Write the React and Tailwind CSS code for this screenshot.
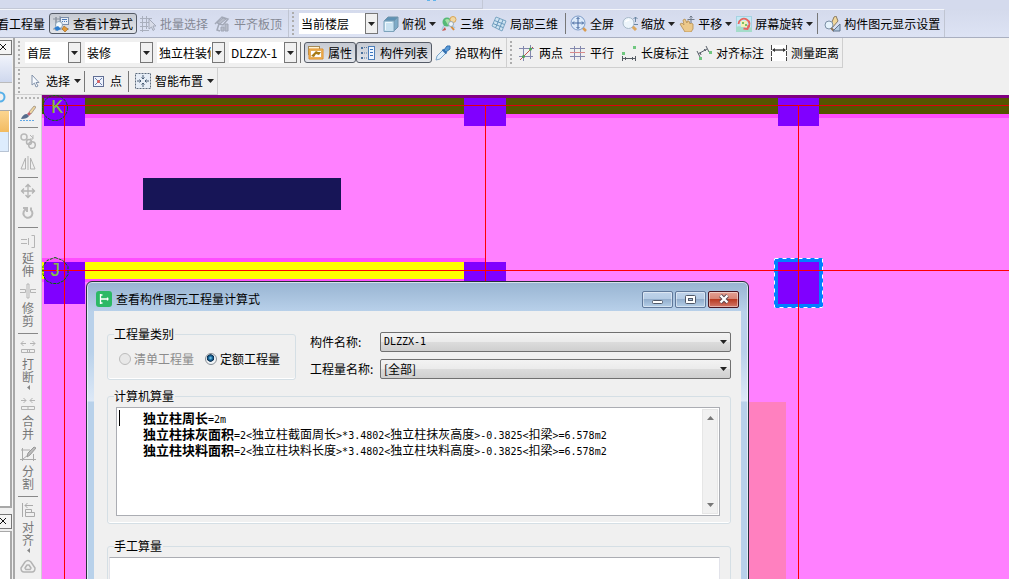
import React from "react";

/* ---------- drawing helpers ---------- */
const Svg = ({ children, w = 16, h = 16 }) => (
  <svg width={w} height={h} viewBox={`0 0 ${w} ${h}`} fill="none" className="shrink-0" aria-hidden="true">
    {children}
  </svg>
);

const Caret = () => (
  <svg width="7" height="4" viewBox="0 0 7 4" className="shrink-0" aria-hidden="true">
    <path d="M0 0h7L3.5 4z" fill="#222" />
  </svg>
);

const icons = {
  formula: (
    <Svg>
      <path d="M3 1v9M7 0v7M0 3h9M0 13h16M3 1l0 14" stroke="#8a929e" />
      <rect x="7.5" y="1.5" width="8" height="7" fill="#e9eff7" stroke="#7d8ea8" />
      <path d="M9 3.5h5M9 5.5h1M11 5.500h1M13 5.500h1" stroke="#4a79b8" />
      <circle cx="6" cy="9" r="3.500" fill="#f4fbff" stroke="#8aa0b4" />
      <path d="M1 12l3 3 4-2-3-3z" fill="#2f7fd0" />
      <path d="M11 10l4 3-3 3-3-3z" fill="#e59a35" stroke="#9b6420" strokeWidth=".6" />
    </Svg>
  ),
  batch: (
    <Svg>
      <path d="M0 2.500h12M0 6.500h9M0 10.500h8M0 14.500h9M2.500 0v16M6.500 0v13" stroke="#a9afbd" />
      <path d="M9 3v10l2.500-2 1.500 3.500 1.500-1L13 10h3z" fill="#d8dce8" stroke="#a3a9b8" />
    </Svg>
  ),
  slab: (
    <Svg>
      <path d="M1 8l7-7 6 2-5 6-4-1-2 6 3 1" stroke="#a3a9b7" strokeWidth="1.500" />
      <path d="M3 7l6-5 3 1-6 5zM7 11h3v4H7zM11 8h3v7h-3z" fill="#b7bcc9" stroke="#a0a6b4" />
    </Svg>
  ),
  cube: (
    <Svg>
      <path d="M1 5l4-4h10l-4 4z" fill="#5f92b5" stroke="#7094ac" />
      <path d="M11 5l4-4v10l-4 4z" fill="#7eabc8" stroke="#7094ac" />
      <path d="M1 5h10v10.500H1z" fill="#c9e2f1" stroke="#7da3bb" />
      <path d="M2.500 14V6.500H9" stroke="#eef8fd" />
    </Svg>
  ),
  orbit: (
    <Svg>
      <path d="M1 14c1-4 3-6 6-6M14 12c-3-3-8-4-10-8" stroke="#a8c9df" strokeWidth="1.500" />
      <circle cx="6" cy="6" r="4.500" fill="#55b977" />
      <path d="M4 4c2-2 4-1 5 1L7 9z" fill="#a8e0a8" />
      <circle cx="12" cy="3.500" r="3" fill="#f1d7a1" stroke="#d8a657" />
      <path d="M9 9l4 5" stroke="#d88b38" strokeWidth="2" />
      <circle cx="10" cy="8" r="2.500" fill="#eef4f8" stroke="#9aabb8" />
      <path d="M1 15l3-4 1 3z" fill="#c8544a" />
    </Svg>
  ),
  local3d: (
    <Svg>
      <path d="M5 1l10 4-4 10L1 10z" fill="#cfe4f2" stroke="#7aa5c2" />
      <path d="M8.500 2.500L4.500 12M12 4L8 13.500M3.500 4.500l10 4M2 7.500l10 4" stroke="#6797bb" />
    </Svg>
  ),
  full: (
    <Svg w={17} h={17}>
      <path d="M12 12l4 4" stroke="#d99c50" strokeWidth="2.500" />
      <circle cx="8" cy="8" r="7" fill="#dceafa" stroke="#7e9cc8" />
      <path d="M8 2.500v11M2.500 8h11M6.500 4L8 2.500 9.500 4M6.500 12L8 13.500 9.500 12M4 6.500L2.500 8 4 9.500M12 6.500L13.500 8 12 9.500" stroke="#41659d" />
    </Svg>
  ),
  zoom: (
    <Svg>
      <path d="M10 10l4 4" stroke="#dca75c" strokeWidth="3" />
      <circle cx="6.500" cy="7" r="5.500" fill="#edf5fb" stroke="#a7b9c9" />
      <path d="M3.500 6c1-2 2-2 4-2" stroke="#fff" strokeWidth="1.500" />
      <path d="M13.500 1v5M11.500 3L13.500 1l2 2M12 8.500h4" stroke="#6b87a3" />
    </Svg>
  ),
  pan: (
    <Svg>
      <path d="M1 8l2-1 2 2-1-5 2-1 2 4 0-2 2 0 1 3 1-1 2 1v5l-2 3H6z" fill="#ecc98b" stroke="#b58e50" strokeWidth=".8" />
      <path d="M12 0v7M8.500 3.500h7M10.500 1.500L12 0l1.500 1.500" stroke="#707b88" />
    </Svg>
  ),
  rotate: (
    <Svg>
      <rect x=".5" y=".5" width="15" height="15" fill="#c5e9f5" stroke="#a6d3e2" />
      <path d="M0 11c5-3 8 3 16 0v5H0z" fill="#a5dcca" />
      <path d="M5 5h6v6H5z" fill="#f3f0b8" />
      <path d="M2.500 8a5.500 5.500 0 1 1 9 4.500M12.500 9l-1 4-4-.5" stroke="#e8655f" strokeWidth="1.800" />
      <path d="M6 6h2v2H6zM9 8h2v2H9z" fill="#7fbf63" />
    </Svg>
  ),
  display: (
    <Svg w={17} h={16}>
      <path d="M10 1l2-1 2 5-6 7-2-1z" fill="#f1d79a" stroke="#8a7c65" />
      <circle cx="5" cy="9" r="4" fill="#e5f2fb" stroke="#7c8fa5" />
      <path d="M7 12l3 3" stroke="#8a7358" strokeWidth="2" />
      <path d="M9 15l7-7v7z" fill="#b4cbe3" stroke="#60748b" />
    </Svg>
  ),
  prop: (
    <Svg>
      <rect x=".5" y="1.500" width="11" height="8" fill="#fff4d4" stroke="#a48a58" />
      <path d="M1 4h14v10H1z" fill="#ffc05b" stroke="#d98c2e" />
      <rect x="2.500" y="5.500" width="11" height="7" fill="#fff" stroke="#e5ad5c" />
      <path d="M3 11l5-5 2 1 3 0-2 3-3-1-2 3z" fill="#a87913" />
    </Svg>
  ),
  list: (
    <Svg>
      <path d="M1 2h2v2H1zM1 7h2v2H1zM1 12h2v2H1z" fill="#49719d" />
      <path d="M4 2.500h3M4 8h3M4 13h3" stroke="#5b7da4" strokeDasharray="1 1" />
      <rect x="8.500" y="1.500" width="6" height="13" fill="#eef5ff" stroke="#4d7eb9" />
      <path d="M10 4.500h3M10 7.500h3M10 10.500h3" stroke="#3873bd" />
    </Svg>
  ),
  pick: (
    <Svg>
      <path d="M1 15l1-4 6-6 3 3-6 6z" fill="#dff0fc" stroke="#7ba5c9" />
      <path d="M7.500 4.500l4 4" stroke="#316fb0" strokeWidth="2" />
      <path d="M9 5l3-4h3v3l-4 3z" fill="#5a9ad6" stroke="#316fb0" />
    </Svg>
  ),
  twoPoint: (
    <Svg>
      <path d="M4.500 1v15M11.500 0v14M0 3.500h15M0 11.500h14" stroke="#8388ad" />
      <path d="M1 15L14 2" stroke="#c44d49" />
      <circle cx="4.500" cy="11.500" r="1.500" fill="#4ca455" />
      <circle cx="11.500" cy="4" r="1.500" fill="#4ca455" />
    </Svg>
  ),
  parallel: (
    <Svg>
      <path d="M4.500 1v14M10.500 1v14M0 3.500h15" stroke="#8388ad" />
      <path d="M0 7.500h15" stroke="#d88a8a" />
      <path d="M0 11.500h15" stroke="#8388ad" />
    </Svg>
  ),
  length: (
    <Svg>
      <path d="M1 7h3v3H1zM12 1h3v3h-3z" fill="#70c780" />
      <path d="M1.500 11v5M14.500 11v5M1.500 13.500h13M4.500 12v3M11.500 12v3" stroke="#555b63" />
    </Svg>
  ),
  align: (
    <Svg>
      <path d="M1 6l3 6M10 1l3 6M2 9l9-5M4 7l1 3M8 4l2 2" stroke="#59606a" />
      <path d="M3 12h3v3H3zM13 6h3v3h-3z" fill="#70c780" />
    </Svg>
  ),
  measure: (
    <Svg>
      <path d="M0 0h16v16H0z" fill="#fff" />
      <path d="M.5 0v16M15.500 0v16" stroke="#444" strokeDasharray="5 1" />
      <path d="M2 5h12" stroke="#333" strokeWidth="1.300" />
      <path d="M4 3L1 5l3 2zM12 3l3 2-3 2z" fill="#333" />
    </Svg>
  ),
  cursor: (
    <Svg>
      <path d="M6 2v10l2.500-2 1.500 4 2-1-2-3.500h3z" fill="#f8fbff" stroke="#8494ab" />
    </Svg>
  ),
  point: (
    <Svg>
      <rect x="3.500" y="3.500" width="10" height="10" fill="#edf2fd" stroke="#606e94" />
      <path d="M5 5l7 7M12 5l-7 7" stroke="#687dab" />
      <circle cx="8.500" cy="8.500" r="1.500" fill="#e45c56" />
    </Svg>
  ),
  smart: (
    <Svg>
      <rect x=".5" y=".5" width="15" height="15" fill="#e6edf6" stroke="#5c6b7c" strokeDasharray="2 1" />
      <path d="M8 2v4M8 10v4M2 8h4M10 8h4M6.500 4.500L8 6l1.500-1.500M6.500 11.500L8 10l1.500 1.500M4.500 6.500L6 8 4.500 9.500M11.500 6.500L10 8l1.500 1.500" stroke="#485d75" />
    </Svg>
  ),
  brush: (
    <Svg>
      <path d="M9 7l5-6 2 1-5 7z" fill="#f0d5a0" stroke="#8f8578" strokeWidth=".7" />
      <path d="M7 9l2-2 2 2-2 2z" fill="#c9606a" />
      <path d="M1 14c1-3 3-5 6-5l2 2c-1 2-4 3-8 3z" fill="#566c8c" />
      <path d="M0 15.500h14" stroke="#62a8e5" strokeDasharray="2 1" />
    </Svg>
  ),
  copy: (
    <Svg>
      <circle cx="4" cy="4" r="3" stroke="#b9b9b9" strokeWidth="1.500" />
      <path d="M10 2l3 3M13 2v4h-3" stroke="#b5b5b5" />
      <circle cx="9" cy="9" r="2.500" stroke="#b5b5b5" strokeWidth="1.500" />
      <circle cx="12" cy="12" r="3.300" stroke="#b5b5b5" strokeWidth="1.500" />
    </Svg>
  ),
  mirror: (
    <Svg>
      <path d="M5.500 3v11H1zM10.500 3v11H15zM8 1v14" stroke="#b3b3b3" />
    </Svg>
  ),
  move: (
    <Svg>
      <path d="M8 1v14M1 8h14M5.500 4L8 1.500 10.500 4M5.500 12L8 14.500 10.500 12M4 5.500L1.500 8 4 10.500M12 5.500L14.500 8 12 10.500" stroke="#b3b3b3" strokeWidth="1.300" />
    </Svg>
  ),
  turn: (
    <Svg>
      <path d="M3 3h4v4M6.500 4A4.500 4.500 0 1 0 11 5V2.500" stroke="#b8b8b8" strokeWidth="2" />
    </Svg>
  ),
  extend: (
    <Svg>
      <path d="M1 6.500h6M1 10.500h6" stroke="#b5b5b5" />
      <path d="M8 5h1v7H8z" fill="#b5b5b5" />
      <path d="M11.500 2.500h3v12h-3" stroke="#b5b5b5" />
    </Svg>
  ),
  trim: (
    <Svg>
      <path d="M0 6.500h5.500v3H0M16 6.500h-5.500v3H16M7 1h2v14H7z" stroke="#b5b5b5" />
    </Svg>
  ),
  breakIt: (
    <Svg>
      <path d="M1 4.500h5M10 4.500h5M3.500 2L1 4.500 3.500 7M12.500 2L15 4.500 12.500 7M1.500 10.500h13v3h-13zM7.500 10v4M9.500 10v4" stroke="#b3b3b3" />
    </Svg>
  ),
  merge: (
    <Svg>
      <path d="M1 4.500h5M10 4.500h5M3.500 2L6 4.500 3.500 7M12.500 2L10 4.500 12.500 7M1.500 10.500h13v3h-13zM8 10v4" stroke="#b3b3b3" />
    </Svg>
  ),
  split: (
    <Svg>
      <path d="M1 4h9M0 13.500h16M2.500 2v13M13.500 8v7M3 13l5-4" stroke="#aaa" />
      <path d="M7 11l1-4 6-6 2 1-6 7z" fill="#bbb" stroke="#999" />
    </Svg>
  ),
  alignV: (
    <Svg>
      <path d="M2.500 1v14M5 3.500h8M7.500 1L5 3.500 7.500 6M5.500 7.500h6v3h-6zM5.500 10.500h9v4h-9z" stroke="#aaa" />
    </Svg>
  ),
  offset: (
    <Svg>
      <path d="M5 3c2-2 4-2 6 0l4 6c0 3-1 4-3 4H4c-2 0-3-1-3-4z" stroke="#b3b3b3" strokeWidth="1.500" />
      <path d="M7 6h2l2 3-1 1.500H6L5 9z" stroke="#b3b3b3" strokeWidth="1.500" strokeLinejoin="round" />
    </Svg>
  ),
};

/* ---------- toolbar parts ---------- */
const Grip = () => (
  <span className="mx-[3px] flex h-6 w-[2px] shrink-0 flex-col justify-between">
    {[0, 1, 2, 3, 4, 5].map((i) => (
      <i key={i} className="block size-[2px] bg-[#adadad]" />
    ))}
  </span>
);

const Sep = ({ className = "" }) => <span className={`h-[21px] w-px shrink-0 bg-[#777] ${className}`} />;

const Tool = ({ icon, label, caret, pressed, disabled, tight, className = "" }) => (
  <button
    type="button"
    disabled={disabled}
    aria-pressed={pressed}
    className={`flex h-[21px] shrink-0 items-center whitespace-nowrap ${tight ? "gap-[3px] px-[2px]" : "gap-1 px-[3px]"} ${
      pressed ? "rounded-[3px] border border-[#555b66] bg-linear-to-b from-[#c6cad2] to-[#e3e5ea]" : ""
    } ${disabled ? "text-[#858995]" : "text-black"} ${className}`}
  >
    {icons[icon]}
    <span>{label}</span>
    {caret && <Caret />}
  </button>
);

const Drop = ({ label, value, className = "" }) => (
  <span className={`relative flex h-[21px] shrink-0 bg-white ${className}`}>
    <select aria-label={label} className="w-full appearance-none overflow-hidden bg-transparent pr-[14px] pl-[2px] outline-none">
      <option>{value}</option>
    </select>
    <span className="pointer-events-none absolute inset-y-0 right-0 flex w-[13px] items-center justify-center border border-[#777] bg-[#f0f0f0]">
      <Caret />
    </span>
  </span>
);

const VTool = ({ icon, label, caret }) => (
  <button type="button" aria-label={label || icon} className="flex w-full shrink-0 flex-col items-center text-[#777]">
    {icons[icon]}
    {label && <span className="mt-[2px] w-3 leading-[13px] break-all">{label}</span>}
    {caret && (
      <svg width="3" height="5" viewBox="0 0 3 5" className="mt-[2px]" aria-hidden="true">
        <path d="M3 0v5L0 2.500z" fill="#888" />
      </svg>
    )}
  </button>
);

const VSep = () => <span className="-mb-px h-px w-5 shrink-0 bg-[#888]" />;

const PanelClose = () => (
  <button type="button" aria-label="关闭" className="flex h-[15px] w-3 shrink-0 items-center justify-start border border-l-0 border-[#777] bg-[#f4f4f4]">
    <svg width="7" height="7" viewBox="0 0 7 7" aria-hidden="true">
      <path d="M0 0l6 6M6 0L0 6" stroke="#111" />
    </svg>
  </button>
);

/* ---------- drawing area ---------- */
const Plan = () => (
  <svg className="block h-full w-full" aria-label="平面图">
    <rect width="100%" height="100%" fill="#ff80ff" />
    <rect width="100%" height="3" fill="#800080" />
    <rect y="3" width="100%" height="16" fill="#555500" />
    <rect y="19" width="100%" height="4" fill="#ff4dff" />
    <rect y="163" width="443" height="24" fill="#ff4dff" />
    <rect y="167" width="422" height="17" fill="#ffff00" />
    <rect x="101" y="83" width="198" height="32" fill="#171557" />
    <rect x="600" y="307" width="144" height="100%" fill="#ff80bf" />
    <g fill="#8000ff">
      <rect x="2" y="3" width="41" height="28" />
      <rect x="422" y="3" width="42" height="28" />
      <rect x="736" y="3" width="41" height="28" />
      <rect x="2" y="167" width="41" height="42" />
      <rect x="422" y="167" width="42" height="42" />
    </g>
    <rect x="732" y="163" width="49" height="50" fill="#0080ff" />
    <rect x="732.500" y="163.500" width="48" height="49" fill="none" stroke="#fff" strokeDasharray="4 4" />
    <rect x="736" y="167" width="41" height="42" fill="#8000ff" />
    <g fill="#ff0000">
      <rect y="10" width="100%" height="1" fill="#e0000c" />
      <rect y="175" width="100%" height="1" />
      <rect x="22" y="10" width="1" height="100%" />
      <rect x="443" y="10" width="1" height="200" />
      <rect x="756" y="10" width="1" height="100%" />
    </g>
    <g fill="none" stroke="#007000" strokeDasharray="3 1">
      <circle cx="13" cy="13" r="12.500" />
      <path d="M13 162.500l8 3 5 6v8l-4 6-6 3h-6l-6-3-3-6v-8l4-6z" />
    </g>
    <g fill="#86c440" fontFamily="'Liberation Mono', monospace" fontSize="20">
      <text x="9" y="18">K</text>
      <text x="7" y="181">J</text>
    </g>
  </svg>
);

/* ---------- dialog ---------- */
const WinBtn = ({ label, danger, children }) => (
  <button
    type="button"
    aria-label={label}
    className={`flex h-[17px] w-[31px] items-center justify-center rounded-[2px] border shadow-[inset_0_0_0_1px_rgba(255,255,255,0.45)] ${
      danger
        ? "border-[#4a1520] bg-[linear-gradient(#e3a093,#d68474_48%,#b83b22_50%,#d2786a)]"
        : "border-[#60789a] bg-[linear-gradient(#bfd3ea,#b4cbe4_48%,#93aecd_50%,#b5cfe8)]"
    }`}
  >
    {children}
  </button>
);

const Field = ({ id, label, mono, children }) => (
  <div className="flex h-5 items-center">
    <label htmlFor={id} className="w-[70px] shrink-0 whitespace-nowrap">
      {label}:
    </label>
    <span className="relative flex h-full min-w-0 flex-1">
      <select
        id={id}
        className={`w-full appearance-none rounded-[2px] border border-[#707070] bg-[linear-gradient(#f3f3f3,#ebebeb_48%,#dcdcdc_50%,#cfcfcf)] pl-[3px] outline-none ${
          mono ? "font-['DejaVu_Sans_Mono',monospace] text-[10px]" : ""
        }`}
      >
        {children}
      </select>
      <span className="pointer-events-none absolute inset-y-0 right-1 flex items-center">
        <Caret />
      </span>
    </span>
  </div>
);

const Group = ({ legend, className = "", children }) => (
  <fieldset className={`min-w-0 rounded-[3px] border border-[#d5dfe5] shadow-[inset_0_-1px_0_#fff] ${className}`}>
    <legend className="ml-[6px] h-[14px] pr-px leading-[14px]">{legend}</legend>
    {children}
  </fieldset>
);

const Radio = ({ label, on, disabled }) => (
  <label className={`flex items-center gap-[3px] ${disabled ? "text-[#8c8c8c]" : ""}`}>
    <input
      type="radio"
      name="kind"
      defaultChecked={on}
      disabled={disabled}
      className="size-3 appearance-none rounded-full border border-[#8a9096] bg-[#f4f4f4] checked:bg-[radial-gradient(circle_at_45%_40%,#8fd6f5_0,#1b6fa3_22%,#0c2d4d_42%,#f0f4f7_50%)] disabled:border-[#bcbcbc] disabled:bg-[#e8e8e8]"
    />
    {label}
  </label>
);

/* Half-width characters take half the width of a Chinese one. */
const H = ({ children }) => <span className="font-['DejaVu_Sans_Mono',monospace] text-[10px]">{children}</span>;
const B = ({ children }) => <b className="text-[13px]">{children}</b>;

const rows = [
  ["独立柱抹灰面积", "独立柱截面周长", "独立柱抹灰高度"],
  ["独立柱块料面积", "独立柱块料长度", "独立柱块料高度"],
];

const Dialog = () => (
  <section
    role="dialog"
    aria-labelledby="dlg-title"
    className="absolute top-[186px] left-[44px] flex h-[480px] w-[663px] flex-col rounded-t-[6px] border border-[#26303a] bg-[linear-gradient(#98b4d2,#b9d1ea_30px,#b9d1ea_70px,#dde9f7_119px,#b8d1ea_120px)] px-[7px] shadow-[inset_0_0_0_1px_rgba(255,255,255,0.6)]"
  >
    <header className="flex h-[29px] shrink-0 items-center pt-[5px] pr-[2px] pl-[2px]">
      <svg width="16" height="16" viewBox="0 0 16 16" aria-hidden="true">
        <rect width="16" height="16" rx="3" fill="#2cb965" />
        <path d="M4.500 3v10M4.500 8h8M4.500 4h2M4.500 12h2M11.500 6.500v3" stroke="#fff" strokeWidth="1.300" />
      </svg>
      <h1 id="dlg-title" className="ml-1 flex-1">
        查看构件图元工程量计算式
      </h1>
      <div className="flex gap-[2px]">
        <WinBtn label="最小化">
          <svg width="11" height="11" viewBox="0 0 11 11" aria-hidden="true">
            <rect x=".5" y="6.500" width="10" height="3" rx="1" fill="#fff" stroke="#505968" />
          </svg>
        </WinBtn>
        <WinBtn label="最大化">
          <svg width="11" height="9" viewBox="0 0 11 9" aria-hidden="true">
            <rect x=".5" y=".5" width="10" height="8" rx="1" fill="#fff" stroke="#505968" />
            <rect x="3.500" y="3.500" width="4" height="2" fill="#a9c0dc" stroke="#505968" />
          </svg>
        </WinBtn>
        <WinBtn label="关闭窗口" danger>
          <svg width="12" height="10" viewBox="0 0 12 10" aria-hidden="true">
            <path d="M2.500 1.500l7 7M9.500 1.500l-7 7" stroke="#5b4650" strokeWidth="4" />
            <path d="M2.500 1.500l7 7M9.500 1.500l-7 7" stroke="#fff" strokeWidth="2.300" />
          </svg>
        </WinBtn>
      </div>
    </header>

    <div className="flex-1 bg-[#f0f0f0] pt-4 pr-[10px] pl-[13px]">
      <div className="flex gap-[14px]">
        <Group legend="工程量类别" className="h-[53px] w-[189px] shrink-0">
          <div className="flex gap-[11px] pt-[10px] pl-[11px]">
            <Radio label="清单工程量" disabled />
            <Radio label="定额工程量" on />
          </div>
        </Group>
        <div className="flex min-w-0 flex-1 flex-col gap-[7px] pt-[5px]">
          <Field id="part" label="构件名称" mono>
            <option>DLZZX-1</option>
          </Field>
          <Field id="qty" label="工程量名称">
            <option>[全部]</option>
          </Field>
        </div>
      </div>

      <Group legend="计算机算量" className="mt-[9px]">
        <div className="mt-[4px] mr-[10px] mb-[7px] ml-2 flex h-[109px] border border-[#abadb3] bg-white">
          <div
            role="textbox"
            aria-label="计算式"
            aria-multiline="true"
            tabIndex={0}
            className="flex min-w-0 flex-1 gap-[23px] overflow-hidden py-[2px] pl-[2px] whitespace-nowrap outline-none"
          >
            <span className="h-4 w-px shrink-0 bg-black" />
            <div>
              <p className="h-4 leading-4">
                <B>独立柱周长</B>
                <H>=2m</H>
              </p>
              {rows.map(([name, len, height]) => (
                <p key={name} className="h-4 leading-4">
                  <B>{name}</B>
                  <H>=2&lt;</H>
                  {len}
                  <H>&gt;*3.4802&lt;</H>
                  {height}
                  <H>&gt;-0.3825&lt;</H>
                  扣梁
                  <H>&gt;=6.578m2</H>
                </p>
              ))}
            </div>
          </div>
          <div className="my-px mr-px flex w-4 shrink-0 flex-col items-center justify-between border border-[#e6e6e6] bg-[#f1f1f1] py-[6px]">
            <svg width="7" height="4" viewBox="0 0 7 4" aria-hidden="true">
              <path d="M0 4h7L3.500 0z" fill="#777" />
            </svg>
            <svg width="7" height="4" viewBox="0 0 7 4" aria-hidden="true">
              <path d="M0 0h7L3.500 4z" fill="#777" />
            </svg>
          </div>
        </div>
      </Group>

      <Group legend="手工算量" className="mt-[15px] h-[120px]">
        <div className="mt-1 mr-[10px] ml-px">
          <textarea aria-label="手工算量" className="block h-[90px] w-full resize-none border border-[#e2e3ea] border-t-[#abadb3] bg-white outline-none" />
        </div>
      </Group>
    </div>
  </section>
);

/* ---------- page ---------- */
export default function App() {
  return (
    <div className="flex h-screen flex-col overflow-hidden bg-[#f0f0f0] font-['Noto_Sans_CJK_SC',sans-serif] text-[12px] leading-4 text-black">
      <div className="flex h-[9px] shrink-0 bg-[#d4daed]">
        <div className="flex w-[483px] justify-end border-r border-b border-[#c3c8d6] pr-[45px]">
          <svg width="10" height="2" viewBox="0 0 10 2" aria-hidden="true">
            <path d="M0 0h3v1H0zM6 0h3v1H6z" fill="#62b4ea" />
          </svg>
        </div>
      </div>

      <div className="flex h-[29px] shrink-0 border-b border-[#a9afc0] bg-linear-to-b from-[#d4daec] to-[#dde3f4]">
        <div className="flex items-center border-t border-r border-t-[#f4f6fb] border-r-[#c0c5d2]">
          <button type="button" className="flex w-[49px] shrink-0 justify-end overflow-hidden pr-1 whitespace-nowrap">
            看工程量
          </button>
          <Tool icon="formula" label="查看计算式" pressed />
          <Tool icon="batch" label="批量选择" disabled />
          <Tool icon="slab" label="平齐板顶" disabled className="mr-[3px]" />
        </div>
        <div className="flex items-center border-t border-r border-t-[#f4f6fb] border-r-[#c0c5d2] pr-[2px]">
          <Grip />
          <Drop label="楼层范围" value="当前楼层" className="mr-[3px] ml-[2px] w-[79px]" />
          <Tool tight icon="cube" label="俯视" caret />
          <Tool tight icon="orbit" label="三维" className="ml-px" />
          <Tool tight icon="local3d" label="局部三维" className="ml-[3px]" />
          <Sep className="mr-[2px] ml-[5px]" />
          <Tool tight icon="full" label="全屏" />
          <Tool tight icon="zoom" label="缩放" caret className="ml-1" />
          <Tool tight icon="pan" label="平移" caret />
          <Tool tight icon="rotate" label="屏幕旋转" caret />
          <Sep className="mr-1 ml-[2px]" />
          <Tool tight icon="display" label="构件图元显示设置" />
        </div>
      </div>

      <div className="flex min-h-0 flex-1">
        <aside className="flex w-[15px] shrink-0 flex-col border-r-2 border-[#a8a8a8] pr-px">
          <div className="mt-[2px]">
            <PanelClose />
          </div>
          <div className="mt-px h-[27px] shrink-0 border-b border-[#bbb] bg-linear-to-b from-[#f0f3fb] to-[#cfd8ee]" />
          <div className="flex h-[27px] shrink-0 items-center">
            <svg width="6" height="12" viewBox="0 0 6 12" aria-hidden="true">
              <path d="M0 1.500a4 4 0 0 1 0 9" fill="none" stroke="#58b0e8" strokeWidth="2" />
            </svg>
          </div>
          <div className="flex min-h-0 flex-1 flex-col border-t border-r-2 border-b-2 border-[#a8a8a8] bg-white pr-px">
            <div className="h-[21px] shrink-0 bg-linear-to-b from-[#fbd590] to-[#f2bb60]" />
            <div className="h-5 shrink-0 border-r border-b border-[#b8c4d4] bg-[#ddecfd]" />
          </div>
          <div className="mt-[6px]">
            <PanelClose />
          </div>
          <div className="mt-[2px] h-[48px] shrink-0 border-t border-r-2 border-[#a8a8a8] bg-white" />
        </aside>

        <div className="flex min-w-0 flex-1 flex-col">
          <div className="flex h-[30px] shrink-0">
            <div className="flex items-center border-r border-b border-[#cfcfcf]">
              <Grip />
              <Drop label="楼层" value="首层" className="ml-[2px] w-14" />
              <Drop label="构件类型" value="装修" className="ml-1 w-[68px]" />
              <Drop label="构件" value="独立柱装修" className="ml-1 w-[68px]" />
              <Drop label="构件名" value="DLZZX-1" className="ml-1 w-[68px]" />
              <Sep className="mx-[3px]" />
              <Tool icon="prop" label="属性" pressed />
              <Tool icon="list" label="构件列表" pressed />
              <Tool icon="pick" label="拾取构件" />
            </div>
            <div className="flex items-center gap-px border-r border-b border-[#cfcfcf]">
              <Grip />
              <Tool icon="twoPoint" label="两点" />
              <Tool icon="parallel" label="平行" />
              <Tool icon="length" label="长度标注" />
              <Tool icon="align" label="对齐标注" />
              <Tool icon="measure" label="测量距离" />
            </div>
          </div>

          <div className="flex h-[27px] shrink-0">
            <div className="flex items-center border-r border-b border-[#cfcfcf]">
              <Grip />
              <Tool icon="cursor" label="选择" caret />
              <Sep className="mr-[2px]" />
              <Tool icon="point" label="点" />
              <Sep className="mr-[3px] ml-[3px]" />
              <Tool icon="smart" label="智能布置" caret />
            </div>
          </div>

          <div className="flex min-h-0 flex-1">
            <nav aria-label="编辑工具" className="flex w-[27px] shrink-0 flex-col items-center gap-[6px] overflow-hidden border-r border-[#cfcfcf] pt-[2px]">
              <span className="flex w-[23px] shrink-0 justify-between">
                {[0, 1, 2, 3, 4, 5].map((i) => (
                  <i key={i} className="block size-[2px] bg-[#b5b5b5]" />
                ))}
              </span>
              <VTool icon="brush" />
              <VSep />
              <VTool icon="copy" />
              <VTool icon="mirror" />
              <VSep />
              <VTool icon="move" />
              <VTool icon="turn" />
              <VSep />
              <VTool icon="extend" label="延伸" />
              <VTool icon="trim" label="修剪" />
              <VSep />
              <VTool icon="breakIt" label="打断" caret />
              <VTool icon="merge" label="合并" />
              <VTool icon="split" label="分割" />
              <VSep />
              <VTool icon="alignV" label="对齐" caret />
              <VTool icon="offset" />
            </nav>
            <main className="relative min-w-0 flex-1 overflow-hidden">
              <Plan />
              <Dialog />
            </main>
          </div>
        </div>
      </div>
    </div>
  );
}
